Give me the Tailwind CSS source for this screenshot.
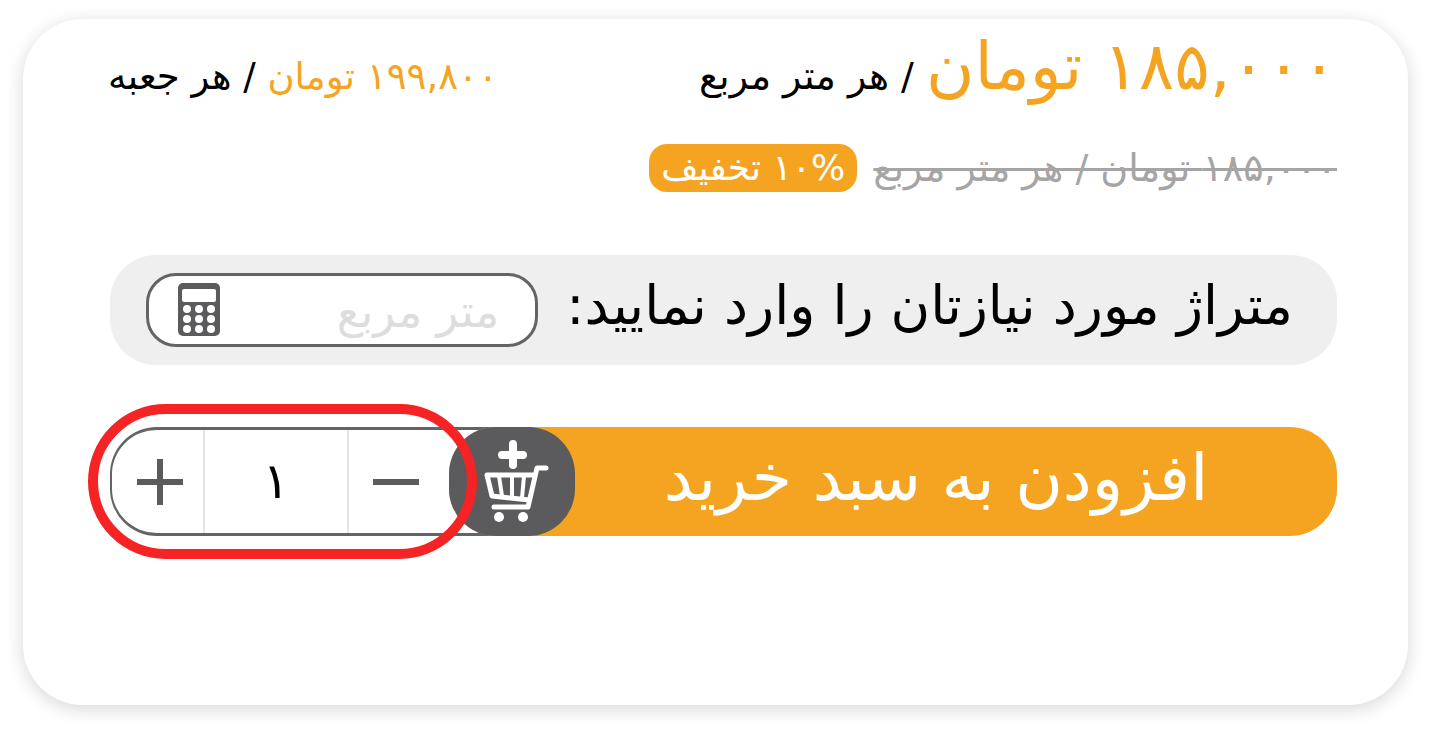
<!DOCTYPE html>
<html lang="fa" dir="rtl">
<head>
<meta charset="utf-8">
<meta name="viewport" content="width=device-width, initial-scale=1">
<title>افزودن به سبد خرید</title>
<script src="https://cdn.jsdelivr.net/npm/@tailwindcss/browser@4"></script>
</head>
<body class="flex min-h-screen bg-white px-[23px] pt-[19px] pb-[26px] font-['DejaVu_Sans',sans-serif] text-black">
<main class="flex-1 rounded-[60px] bg-white pr-[71px] pl-[85px] shadow-[0_4px_18px_rgba(0,0,0,0.16)]">
  <section class="flex h-[125px] items-baseline justify-between pt-3 whitespace-nowrap">
    <p class="text-[38px] leading-[72px]"><span class="text-[66px] text-[#f5a422]">۱۸۵,۰۰۰ تومان</span> / هر متر مربع</p>
    <p class="text-[37px] leading-[72px]"><span class="text-[#f5a422]">۱۹۹,۸۰۰ تومان</span> / هر جعبه</p>
  </section>
  <section class="flex h-12 items-center gap-4 text-[38px] leading-[48px] whitespace-nowrap">
    <del class="text-[#a5a5a5] decoration-3">۱۸۵,۰۰۰ تومان / هر متر مربع</del>
    <span class="rounded-[18px] bg-[#f5a422] px-3 text-[36px] text-white">۱۰% تخفیف</span>
  </section>
  <form class="pl-0.5">
    <section class="mt-[63px] flex h-[110px] items-center justify-between rounded-[46px] bg-[#efefef] pr-11 pl-9">
      <label for="area" class="pb-2 text-[54px] leading-[72px] whitespace-nowrap">متراژ مورد نیازتان را وارد نمایید:</label>
      <div class="flex h-[74px] w-[392px] shrink-0 items-center rounded-[30px] border-[3px] border-[#646466] bg-white pr-9 pl-7">
        <input id="area" type="text" placeholder="متر مربع" class="h-16 min-w-0 flex-1 bg-transparent pt-1 text-[45px] outline-none placeholder:text-[#dddddd]">
        <svg class="h-[54px] w-11 shrink-0" viewBox="0 0 44 54" aria-hidden="true">
          <rect x="1" y="0" width="42" height="53" rx="5" fill="#5b5b5d"/>
          <rect x="5" y="6" width="34" height="13" rx="2" fill="#fff"/>
          <g fill="#fff"><circle cx="10" cy="26" r="4"/><circle cx="22" cy="26" r="4"/><circle cx="34" cy="26" r="4"/><circle cx="10" cy="36" r="4"/><circle cx="22" cy="36" r="4"/><circle cx="34" cy="36" r="4"/><circle cx="10" cy="46" r="4"/><circle cx="22" cy="46" r="4"/><circle cx="34" cy="46" r="4"/></g>
        </svg>
      </div>
    </section>
    <section class="mt-[62px] flex h-[109px]">
      <button type="submit" class="z-10 -ml-[63px] flex flex-1 rounded-[47px] bg-[#f5a422] text-white">
        <span class="flex-1 self-center pr-10 pb-2 text-[65px] leading-[88px] whitespace-nowrap">افزودن به سبد خرید</span>
        <span class="flex h-full w-[126px] shrink-0 items-center justify-center rounded-[47px] bg-[#5b5b5d]">
          <svg class="h-[109px] w-[126px]" viewBox="0 0 126 109" fill="none" stroke="#fff" stroke-linecap="round" stroke-linejoin="round" aria-hidden="true">
            <path stroke-width="8" d="M64 17v21M53 28h21"/>
            <path stroke-width="5" d="M97 41H88L79 80H45M86 48H38L43 69L80 73"/>
            <path stroke-width="4" d="M50 49L53 69M63 49V70M75 49L73 71"/>
            <g fill="#fff" stroke="none"><circle cx="50" cy="90" r="5"/><circle cx="74" cy="90" r="5"/></g>
          </svg>
        </span>
      </button>
      <div class="relative flex w-[402px] shrink-0 rounded-l-[47px] border-[3px] border-l-[2px] border-[#646466] pr-[63px]">
        <button type="button" aria-label="کاهش تعداد" class="flex flex-1 items-center justify-center pr-1">
          <svg class="h-12 w-12" viewBox="0 0 48 48" stroke="#5b5b5d" stroke-width="6" aria-hidden="true"><path d="M1 24h46"/></svg>
        </button>
        <input type="text" aria-label="تعداد" value="۱" class="w-[146px] border-x-2 border-[#e4e4e4] bg-transparent text-center text-[50px] outline-none">
        <button type="button" aria-label="افزایش تعداد" class="flex w-[91px] items-center justify-center pl-1">
          <svg class="h-12 w-12" viewBox="0 0 48 48" stroke="#5b5b5d" stroke-width="6" aria-hidden="true"><path d="M1 24h46M24 1v46"/></svg>
        </button>
        <span class="pointer-events-none absolute -top-[26px] right-[32px] -bottom-[26px] -left-6 z-20 rounded-full border-[10px] border-[#f52323]"></span>
      </div>
    </section>
  </form>
</main>
</body>
</html>
